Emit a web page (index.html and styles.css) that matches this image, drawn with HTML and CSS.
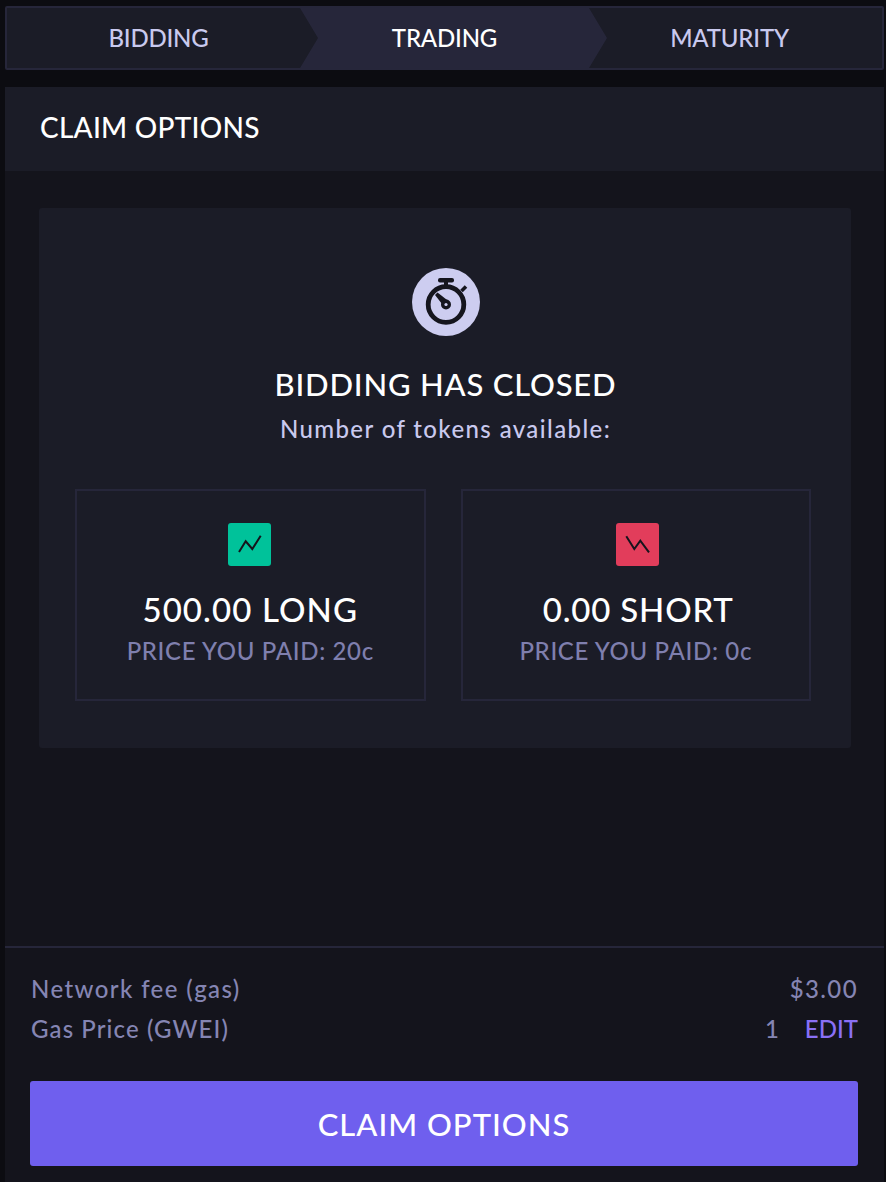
FILE: index.html
```html
<!DOCTYPE html>
<html lang="en">
<head>
<meta charset="UTF-8">
<meta name="viewport" content="width=device-width, initial-scale=1.0">
<title>Claim Options</title>
<link rel="stylesheet" href="styles.css">
</head>
<body>
<nav class="stepper">
    <div class="step step-first">BIDDING</div>
    <div class="step step-active">TRADING</div>
    <div class="step step-last">MATURITY</div>
</nav>

<main class="panel">
    <h1 class="panel-title">CLAIM OPTIONS</h1>

    <div class="panel-body">
        <section class="card">
            <span class="timer-badge">
                <svg width="68" height="68" viewBox="0 0 68 68">
                    <rect x="26" y="10" width="16" height="4.5" rx="2" fill="#15151e"/>
                    <rect x="32" y="13" width="4" height="7" fill="#15151e"/>
                    <line x1="49.5" y1="23" x2="54" y2="18.500" stroke="#15151e" stroke-width="3.600"/>
                    <circle cx="34" cy="36.500" r="17.800" fill="none" stroke="#15151e" stroke-width="4.800"/>
                    <polygon points="23,27 25.500,24.500 37,33.500 32,38.500" fill="#15151e"/>
                    <circle cx="34" cy="36.500" r="5" fill="#15151e"/>
                    <circle cx="34" cy="36.500" r="1.600" fill="#cdcdf0"/>
                </svg>
            </span>
            <h2 class="card-title">BIDDING HAS CLOSED</h2>
            <p class="card-sub">Number of tokens available:</p>

            <div class="tiles">
                <div class="tile">
                    <span class="tile-icon icon-long">
                        <svg width="43" height="43" viewBox="0 0 43 43">
                            <polyline points="11,29 17.700,18.300 24.300,26 32.700,12.700" fill="none" stroke="#14141c" stroke-width="2"/>
                        </svg>
                    </span>
                    <div class="tile-amount">500.00 LONG</div>
                    <div class="tile-price">PRICE YOU PAID: 20c</div>
                </div>
                <div class="tile tile-short">
                    <span class="tile-icon icon-short">
                        <svg width="43" height="43" viewBox="0 0 43 43">
                            <polyline points="10.300,13.300 18.300,26 24.300,17.700 33,29.300" fill="none" stroke="#14141c" stroke-width="2"/>
                        </svg>
                    </span>
                    <div class="tile-amount">0.00 SHORT</div>
                    <div class="tile-price">PRICE YOU PAID: 0c</div>
                </div>
            </div>
        </section>
    </div>

    <footer class="panel-footer">
        <div class="fee-row">
            <span>Network fee (gas)</span>
            <span>$3.00</span>
        </div>
        <div class="fee-row">
            <span class="gas-label">Gas Price (GWEI)</span>
            <span class="gas-value">1 <a class="edit-link">EDIT</a></span>
        </div>
        <button class="claim-button">CLAIM OPTIONS</button>
    </footer>
</main>
</body>
</html>
```

FILE: styles.css
```css
* {
    box-sizing: border-box;
}

html, body {
    height: 100%;
}

body {
    margin: 0;
    padding: 6px 2px 0 5px;
    height: 1182px;
    overflow: hidden;
    display: flex;
    flex-direction: column;
    background-color: #0c0c11;
    font-family: 'Lato', 'Liberation Sans', sans-serif;
    font-weight: 500;
    color: #fff;
}

.stepper {
    display: flex;
    height: 64px;
    flex-shrink: 0;
    background: #1b1c27;
    border: 2px solid #26263a;
    border-radius: 2px;
}

.step {
    display: flex;
    align-items: center;
    justify-content: center;
    padding-bottom: 2px;
    font-size: 24px;
    letter-spacing: -0.2px;
    color: #c9c9ee;
}

.step-first {
    width: 293px;
    padding-left: 10px;
}

.step-active {
    width: 307px;
    padding-right: 18px;
    color: #fff;
    background: #26263a;
    clip-path: polygon(0 0, calc(100% - 18px) 0, 100% 50%, calc(100% - 18px) 100%, 0 100%, 18px 50%);
}

.step-last {
    flex: 1;
    margin-left: -18px;
    padding-right: 12px;
}

.panel {
    flex: 1;
    margin-top: 17px;
    display: flex;
    flex-direction: column;
    background: #14141c;
}

.panel-title {
    margin: 0;
    height: 84px;
    padding: 0 0 4px 35px;
    display: flex;
    align-items: center;
    background: #1b1c27;
    font-size: 28px;
    font-weight: 500;
    letter-spacing: 0.25px;
}

.panel-body {
    flex: 1;
    padding: 37px 33px 0 34px;
}

.card {
    height: 540px;
    padding: 60px 40px 0 36px;
    display: flex;
    flex-direction: column;
    align-items: center;
    background: #1b1c27;
    border-radius: 3px;
}

.timer-badge {
    width: 68px;
    height: 68px;
    margin-left: 6px;
    border-radius: 50%;
    background: #cdcdf0;
}

.timer-badge svg {
    display: block;
}

.card-title {
    margin: 28px 0 0 5px;
    font-size: 31px;
    line-height: 40px;
    font-weight: 500;
    letter-spacing: 0.8px;
}

.card-sub {
    margin: 10px 0 0 5px;
    font-size: 24px;
    line-height: 30px;
    letter-spacing: 1.4px;
    color: #c9c9ee;
}

.tiles {
    width: 100%;
    margin-top: 45px;
    display: flex;
    gap: 35px;
}

.tile {
    flex: 1;
    height: 212px;
    padding-top: 32px;
    display: flex;
    flex-direction: column;
    align-items: center;
    border: 2px solid #26263a;
}

.tile-icon {
    width: 43px;
    height: 43px;
    border-radius: 3px;
}

.tile-icon svg {
    display: block;
}

.icon-long {
    margin-right: 2px;
    background: #00c29a;
}

.icon-short {
    margin-left: 4px;
    background: #e23d5b;
}

.tile-amount {
    margin-top: 23px;
    font-size: 33px;
    line-height: 40px;
    letter-spacing: 1.1px;
}

.tile-short .tile-amount {
    margin-left: 5px;
    letter-spacing: 0.8px;
}

.tile-price {
    margin-top: 7px;
    font-size: 24px;
    line-height: 30px;
    letter-spacing: 0.65px;
    color: #7f7fae;
}

.panel-footer {
    height: 236px;
    padding: 21px 26px 0 25px;
    border-top: 2px solid #26263a;
}

.fee-row {
    display: flex;
    justify-content: space-between;
    padding-left: 1px;
    font-size: 24px;
    line-height: 40px;
    letter-spacing: 1.4px;
    color: #8585b3;
}

.gas-label {
    letter-spacing: 1.1px;
}

.gas-value {
    word-spacing: 17px;
}

.edit-link {
    color: #8a70f5;
    letter-spacing: 0;
}

.claim-button {
    display: block;
    width: 100%;
    height: 85px;
    margin-top: 32px;
    border: none;
    border-radius: 3px;
    background: #6f5fee;
    color: #fff;
    font-family: inherit;
    font-size: 31px;
    font-weight: 500;
    letter-spacing: 1px;
    cursor: pointer;
}
```
